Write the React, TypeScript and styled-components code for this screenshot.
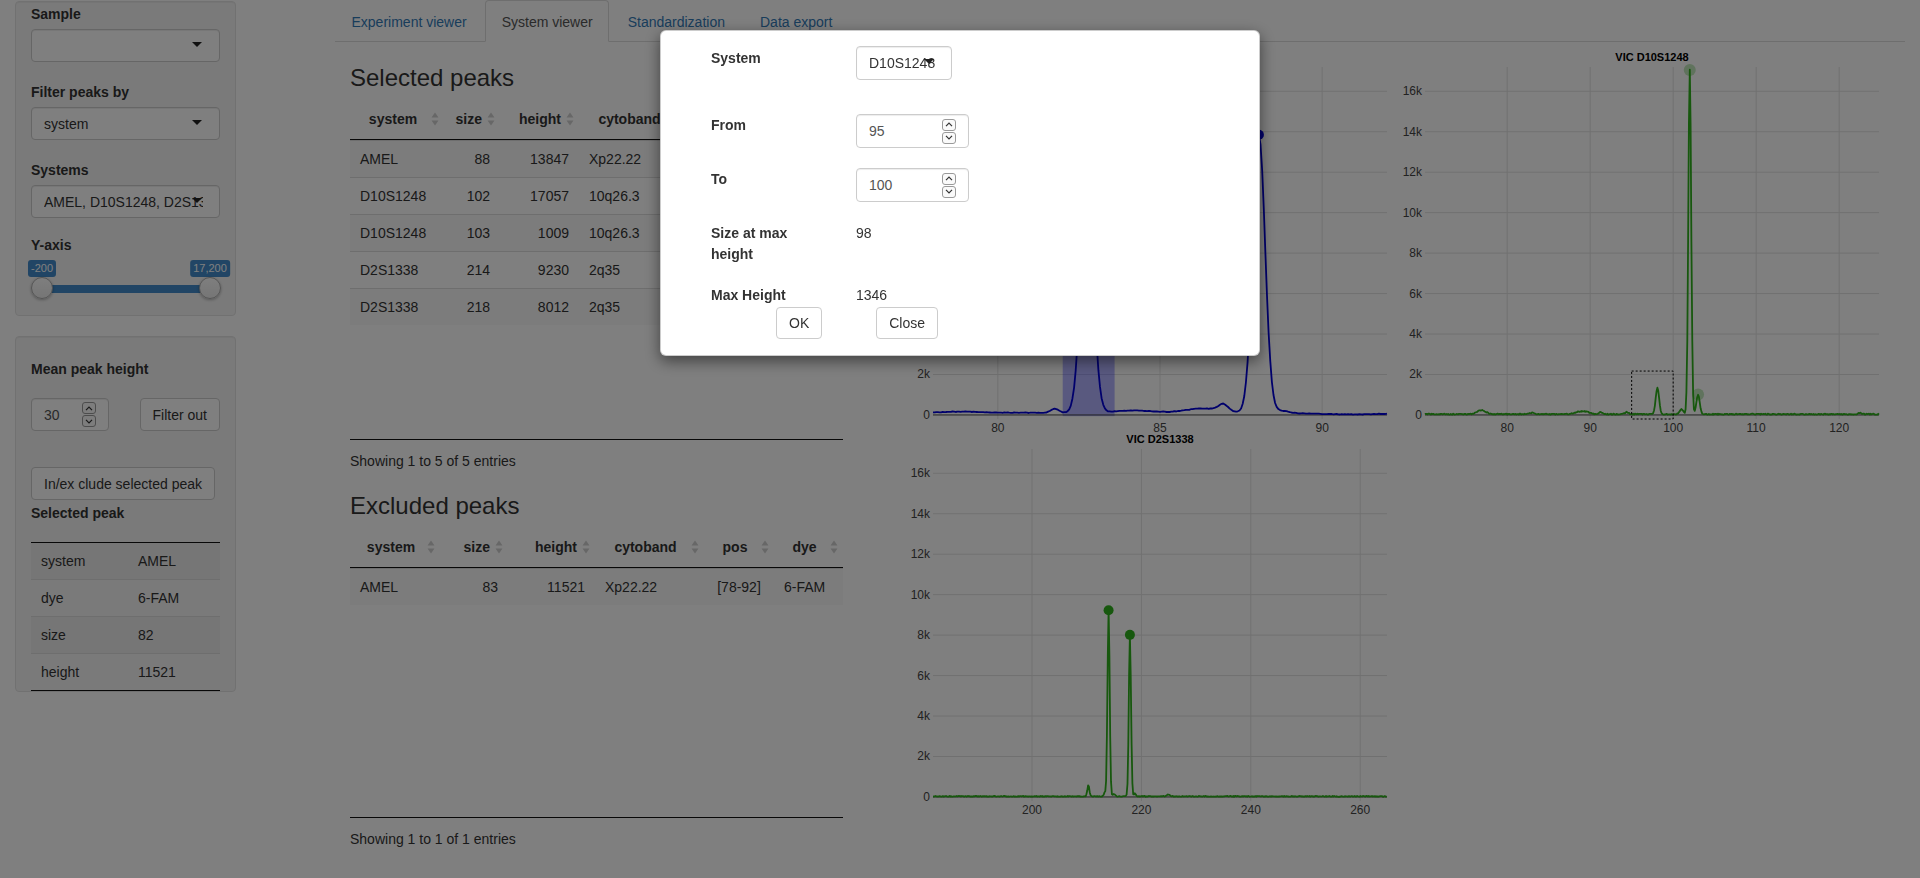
import React, { useMemo } from "react";
import styled, { createGlobalStyle } from "styled-components";

const GlobalStyle = createGlobalStyle`
  * { box-sizing: border-box; }
  html, body { margin: 0; padding: 0; background: #fff; }
  body {
    font-family: "Liberation Sans", Arial, Helvetica, sans-serif;
    font-size: 14px;
    line-height: 20px;
    color: #333;
  }
`;

/* ---------- layout ---------- */

const Page = styled.div`
  display: grid;
  grid-template-columns: 320px 1600px;
  width: 1920px;
  height: 878px;
  overflow: hidden;
`;

const Sidebar = styled.aside`
  padding: 1px 15px 0;
`;

const Well = styled.div<{ $pt: number; $pb: number }>`
  width: 221px;
  padding: ${(p) => p.$pt}px 15px ${(p) => p.$pb}px;
  background: #f5f5f5;
  border: 1px solid #e3e3e3;
  border-radius: 4px;
  box-shadow: inset 0 1px 1px rgba(0, 0, 0, 0.05);
  & + & {
    margin-top: 20px;
  }
`;

const SideLabel = styled.div<{ $mt?: number; $mb?: number }>`
  margin-top: ${(p) => p.$mt ?? 0}px;
  margin-bottom: ${(p) => p.$mb ?? 0}px;
  font-weight: bold;
`;

const Row = styled.div<{ $mt?: number; $gap?: number }>`
  display: flex;
  align-items: center;
  gap: ${(p) => p.$gap ?? 0}px;
  margin-top: ${(p) => p.$mt ?? 0}px;
`;

const Main = styled.main`
  padding: 0 15px;
`;

/* ---------- form controls ---------- */

const Control = styled.div<{ $w: number; $h: number }>`
  position: relative;
  display: flex;
  align-items: center;
  width: ${(p) => p.$w}px;
  height: ${(p) => p.$h}px;
  padding: 0 12px;
  color: #555;
  background: #fff;
  border: 1px solid #ccc;
  border-radius: 4px;
  box-shadow: inset 0 1px 1px rgba(0, 0, 0, 0.075);
`;

const ControlText = styled.span<{ $clip: number }>`
  flex: 1;
  min-width: 0;
  overflow: ${(p) => (p.$clip > 0 ? "hidden" : "visible")};
  white-space: nowrap;
  margin-right: ${(p) => p.$clip}px;
  color: #333;
`;

const Caret = styled.span`
  position: absolute;
  right: 17px;
  top: 50%;
  margin-top: -4px;
  border-left: 5px solid transparent;
  border-right: 5px solid transparent;
  border-top: 5px solid #222;
`;

const SpinStack = styled.span`
  display: flex;
  flex-direction: column;
  gap: 1px;
  margin-left: auto;
`;

const SpinBtn = styled.span`
  display: flex;
  align-items: center;
  justify-content: center;
  width: 14px;
  height: 12px;
  background: #fafafa;
  border: 1px solid #9a9a9a;
  border-radius: 3px;
`;

const Button = styled.button<{ $h?: number }>`
  height: ${(p) => p.$h ?? 33}px;
  padding: 0 12px;
  font: inherit;
  color: #333;
  white-space: nowrap;
  background: #fff;
  border: 1px solid #ccc;
  border-radius: 4px;
`;

function Select({ value, w, h, clip = 4 }: { value: string; w: number; h: number; clip?: number }) {
  return (
    <Control $w={w} $h={h}>
      <ControlText $clip={clip}>{value}</ControlText>
      <Caret />
    </Control>
  );
}

function Chevron({ up }: { up?: boolean }) {
  return (
    <svg width="8" height="5" viewBox="0 0 8 5">
      <polyline
        points={up ? "1,4.2 4,1.2 7,4.2" : "1,0.8 4,3.8 7,0.8"}
        fill="none"
        stroke="#333"
        strokeWidth="1.2"
      />
    </svg>
  );
}

function NumberInput({ value, w, h }: { value: string; w: number; h: number }) {
  return (
    <Control $w={w} $h={h}>
      <span>{value}</span>
      <SpinStack>
        <SpinBtn>
          <Chevron up />
        </SpinBtn>
        <SpinBtn>
          <Chevron />
        </SpinBtn>
      </SpinStack>
    </Control>
  );
}

/* ---------- range slider ---------- */

const SliderBox = styled.div`
  position: relative;
  height: 40px;
`;

const SliderBar = styled.div`
  position: absolute;
  top: 25px;
  left: 11px;
  right: 10px;
  height: 8px;
  background: #428bca;
`;

const SliderTag = styled.span`
  position: absolute;
  top: 0;
  transform: translateX(-50%);
  padding: 0 3px;
  font-size: 11px;
  line-height: 17px;
  color: #fff;
  white-space: nowrap;
  background: #428bca;
  border-radius: 3px;
`;

const SliderHandle = styled.span`
  position: absolute;
  top: 17px;
  width: 22px;
  height: 22px;
  margin-left: -11px;
  background: linear-gradient(#fdfdfd, #ececec);
  border: 1px solid #a9a9a9;
  border-radius: 50%;
  box-shadow: 0 1px 3px rgba(0, 0, 0, 0.3);
`;

function RangeSlider({ min, max, from, to }: { min: number; max: number; from: number; to: number }) {
  const px = (v: number) => 11 + ((v - min) / (max - min)) * 168;
  const fmt = (v: number) => v.toLocaleString("en-US");
  return (
    <SliderBox>
      <SliderBar />
      <SliderTag style={{ left: px(from) }}>{fmt(from)}</SliderTag>
      <SliderTag style={{ left: px(to) }}>{fmt(to)}</SliderTag>
      <SliderHandle style={{ left: px(from) }} />
      <SliderHandle style={{ left: px(to) }} />
    </SliderBox>
  );
}

/* ---------- small key/value table ---------- */

const KVTable = styled.table`
  width: 189px;
  margin-top: 19px;
  table-layout: fixed;
  border-collapse: collapse;
  border-top: 1px solid #111;
  border-bottom: 1px solid #111;
  td {
    padding: 8px 10px;
  }
  tr + tr td {
    border-top: 1px solid #ddd;
  }
  tr:nth-child(odd) td {
    background: rgba(0, 0, 0, 0.035);
  }
`;

/* ---------- tabs ---------- */

const TabBar = styled.ul`
  display: flex;
  margin: 0;
  padding: 0;
  list-style: none;
  border-bottom: 1px solid #ddd;
`;

const Tab = styled.li<{ $active?: boolean }>`
  margin: 0 2px -1px 0;
  padding: 11px 15.5px 9px;
  color: ${(p) => (p.$active ? "#555" : "#337ab7")};
  background: ${(p) => (p.$active ? "#fff" : "transparent")};
  border: 1px solid ${(p) => (p.$active ? "#ddd" : "transparent")};
  border-bottom-color: transparent;
  border-radius: 4px 4px 0 0;
`;

const TabContent = styled.div`
  display: flex;
`;

const TablesCol = styled.section`
  width: 493px;
  margin-left: 15px;
`;

const Heading = styled.h3<{ $mt: number }>`
  margin: ${(p) => p.$mt}px 0 7px;
  font-size: 24px;
  font-weight: 500;
  line-height: 28px;
`;

const Info = styled.div`
  padding-top: 11px;
`;

/* ---------- data tables ---------- */

type Align = "left" | "center" | "right";
interface Col {
  name: string;
  width: number;
  head: Align;
  cell: Align;
}

const makeCols = (w: number[]): Col[] => [
  { name: "system", width: w[0], head: "center", cell: "left" },
  { name: "size", width: w[1], head: "right", cell: "right" },
  { name: "height", width: w[2], head: "right", cell: "right" },
  { name: "cytoband", width: w[3], head: "center", cell: "left" },
  { name: "pos", width: w[4], head: "center", cell: "center" },
  { name: "dye", width: w[5], head: "center", cell: "left" },
];

const GridTable = styled.table`
  width: 493px;
  table-layout: fixed;
  border-collapse: collapse;
`;

const Th = styled.th<{ $align: Align }>`
  position: relative;
  padding: 10px 18px 10px 10px;
  font-weight: bold;
  text-align: ${(p) => p.$align};
  border-bottom: 1px solid #111;
`;

const Td = styled.td<{ $align: Align }>`
  padding: 8px 10px;
  text-align: ${(p) => p.$align};
  white-space: nowrap;
  border-top: 1px solid #ddd;
`;

const BodyRow = styled.tr`
  &:nth-child(odd) td {
    background: #f9f9f9;
  }
`;

const ScrollBody = styled.div<{ $h: number }>`
  height: ${(p) => p.$h}px;
  overflow: hidden;
  border-bottom: 1px solid #111;
`;

const SortSvg = styled.svg`
  position: absolute;
  right: 5px;
  top: 50%;
  margin-top: -7px;
  fill: #cfcfcf;
`;

function SortIcon() {
  return (
    <SortSvg width="8" height="14" viewBox="0 0 8 14">
      <path d="M4 0.5 L7.5 5.5 L0.5 5.5 Z" />
      <path d="M4 13.5 L7.5 8.5 L0.5 8.5 Z" />
    </SortSvg>
  );
}

function Colgroup({ cols }: { cols: Col[] }) {
  return (
    <colgroup>
      {cols.map((c) => (
        <col key={c.name} style={{ width: c.width }} />
      ))}
    </colgroup>
  );
}

function PeakTable({ cols, rows, bodyHeight }: { cols: Col[]; rows: string[][]; bodyHeight: number }) {
  return (
    <div>
      <GridTable>
        <Colgroup cols={cols} />
        <thead>
          <tr>
            {cols.map((c) => (
              <Th key={c.name} $align={c.head}>
                {c.name}
                <SortIcon />
              </Th>
            ))}
          </tr>
        </thead>
      </GridTable>
      <ScrollBody $h={bodyHeight}>
        <GridTable>
          <Colgroup cols={cols} />
          <tbody>
            {rows.map((r, i) => (
              <BodyRow key={i}>
                {r.map((v, j) => (
                  <Td key={j} $align={cols[j].cell}>
                    {v}
                  </Td>
                ))}
              </BodyRow>
            ))}
          </tbody>
        </GridTable>
      </ScrollBody>
    </div>
  );
}

const selectedRows = [
  ["AMEL", "88", "13847", "Xp22.22", "[78-92]", "6-FAM"],
  ["D10S1248", "102", "17057", "10q26.3", "[70-125]", "VIC"],
  ["D10S1248", "103", "1009", "10q26.3", "[70-125]", "VIC"],
  ["D2S1338", "214", "9230", "2q35", "[182-265]", "VIC"],
  ["D2S1338", "218", "8012", "2q35", "[182-265]", "VIC"],
];
const excludedRows = [["AMEL", "83", "11521", "Xp22.22", "[78-92]", "6-FAM"]];

/* ---------- electropherogram charts ---------- */

const PlotsGrid = styled.section`
  display: grid;
  grid-template-columns: repeat(2, 492px);
  grid-template-rows: repeat(2, 382px);
  margin: 2px 0 0 52px;
`;

const ChartSvg = styled.svg`
  display: block;
  overflow: visible;
  font-family: "Liberation Sans", Arial, sans-serif;
`;

const AxisText = styled.text`
  font-size: 12px;
  fill: #444;
`;

const TitleText = styled.text`
  font-size: 11px;
  font-weight: bold;
  fill: #000;
`;

type Peak = [number, number, number];

interface ChartProps {
  title: string;
  xMin: number;
  xMax: number;
  xTicks: number[];
  color: string;
  peaks: Peak[];
  base: number;
  noise: number;
  step: number;
  seed: number;
  dots?: { x: number; y: number; faint?: boolean }[];
  band?: [number, number];
  box?: [number, number, number, number];
}

const Y_MIN = -200;
const Y_MAX = 17200;
const CW = 492;
const CH = 382;
const PL = 38;
const PT = 23;
const PW = 454;
const PH = 352;
const yTicks = [0, 2000, 4000, 6000, 8000, 10000, 12000, 14000, 16000];

const rand = (i: number, seed: number) => {
  const s = Math.sin(i * 127.1 + seed * 311.7) * 43758.5453;
  return s - Math.floor(s);
};

function Chart({ title, xMin, xMax, xTicks, color, peaks, base, noise, step, seed, dots = [], band, box }: ChartProps) {
  const sx = (u: number) => PL + ((u - xMin) / (xMax - xMin)) * PW;
  const sy = (v: number) => PT + ((Y_MAX - v) / (Y_MAX - Y_MIN)) * PH;

  const path = useMemo(() => {
    const pts: string[] = [];
    const n = Math.round((xMax - xMin) / step);
    for (let i = 0; i <= n; i++) {
      const u = xMin + i * step;
      let v = base + (rand(i, seed) - 0.5) * noise;
      for (const [c, h, s] of peaks) v += h * Math.exp(-((u - c) ** 2) / (2 * s * s));
      pts.push(`${sx(u).toFixed(1)},${sy(v).toFixed(1)}`);
    }
    return "M" + pts.join("L");
  }, [xMin, xMax, step, base, noise, seed, peaks]);

  return (
    <ChartSvg width={CW} height={CH} viewBox={`0 0 ${CW} ${CH}`}>
      {yTicks.slice(1).map((t) => (
        <line key={t} x1={PL} x2={PL + PW} y1={sy(t)} y2={sy(t)} stroke="#e1e1e1" />
      ))}
      {xTicks.map((t) => (
        <line key={t} x1={sx(t)} x2={sx(t)} y1={PT} y2={PT + PH} stroke="#e1e1e1" />
      ))}
      {band && (
        <rect
          x={sx(band[0])}
          y={PT}
          width={sx(band[1]) - sx(band[0])}
          height={sy(-60) - PT}
          fill="rgba(0, 0, 255, 0.3)"
        />
      )}
      <line x1={PL} x2={PL + PW} y1={sy(0)} y2={sy(0)} stroke="#444" />
      <path d={path} fill="none" stroke={color} strokeWidth="1.8" strokeLinejoin="round" />
      {dots.map((d, i) => (
        <circle
          key={i}
          cx={sx(d.x)}
          cy={sy(d.y)}
          r={d.faint ? 6 : 5}
          fill={color}
          fillOpacity={d.faint ? 0.3 : 1}
        />
      ))}
      {box && (
        <rect
          x={sx(box[0])}
          y={sy(box[3])}
          width={sx(box[1]) - sx(box[0])}
          height={sy(box[2]) - sy(box[3])}
          fill="none"
          stroke="#000"
          strokeDasharray="2,2"
        />
      )}
      {yTicks.map((t) => (
        <AxisText key={t} x={PL - 3} y={sy(t) + 4} textAnchor="end">
          {t === 0 ? "0" : `${t / 1000}k`}
        </AxisText>
      ))}
      {xTicks.map((t) => (
        <AxisText key={t} x={sx(t)} y={388} textAnchor="middle">
          {t}
        </AxisText>
      ))}
      <TitleText x={PL + PW / 2} y={17} textAnchor="middle">
        {title}
      </TitleText>
    </ChartSvg>
  );
}

const amelPeaks: Peak[] = [
  [78.8, 50, 0.6],
  [81.75, 200, 0.12],
  [82.75, 11410, 0.19],
  [84.2, 110, 0.6],
  [86.3, 210, 0.5],
  [86.95, 360, 0.15],
  [88.05, 13740, 0.19],
  [88.75, 110, 0.2],
  [90.9, -80, 1.1],
];

const d10Peaks: Peak[] = [
  [76.9, 200, 0.5],
  [83.0, 70, 0.3],
  [88.5, 100, 0.4],
  [89.4, 120, 0.5],
  [91.3, 90, 0.25],
  [94.4, 100, 0.2],
  [98.1, 1300, 0.2],
  [101.0, 250, 0.2],
  [102.0, 17010, 0.17],
  [103.0, 950, 0.2],
  [122.5, 60, 0.2],
];

const d2Peaks: Peak[] = [
  [210.3, 550, 0.18],
  [213.3, 180, 0.15],
  [214.0, 9200, 0.2],
  [215.0, 120, 0.2],
  [217.9, 7980, 0.2],
  [218.8, 150, 0.15],
  [224.9, 80, 0.3],
];

/* ---------- modal ---------- */

const Backdrop = styled.div`
  position: fixed;
  inset: 0;
  z-index: 1040;
  background: #000;
  opacity: 0.5;
`;

const Dialog = styled.div`
  position: fixed;
  top: 30px;
  left: 660px;
  z-index: 1050;
  width: 600px;
  padding: 15px 15px 16px 50px;
  background: #fff;
  border: 1px solid rgba(0, 0, 0, 0.2);
  border-radius: 6px;
  box-shadow: 0 5px 15px rgba(0, 0, 0, 0.5);
`;

const FieldRow = styled.div<{ $mt?: number }>`
  display: grid;
  grid-template-columns: 145px auto;
  align-items: start;
  margin-top: ${(p) => p.$mt ?? 0}px;
  line-height: 21px;
`;

const FieldName = styled.div<{ $pt?: number }>`
  max-width: 110px;
  padding-top: ${(p) => p.$pt ?? 0}px;
  font-weight: bold;
`;

const ButtonBar = styled.div`
  display: flex;
  gap: 54px;
  margin-top: 1px;
  padding-left: 65px;
`;

export default function App() {
  return (
    <>
      <GlobalStyle />
      <Page>
        <Sidebar>
          <Well $pt={2} $pb={15}>
            <SideLabel $mb={5}>Sample</SideLabel>
            <Select value="" w={189} h={33} />
            <SideLabel $mt={20} $mb={5}>
              Filter peaks by
            </SideLabel>
            <Select value="system" w={189} h={33} />
            <SideLabel $mt={20} $mb={5}>
              Systems
            </SideLabel>
            <Select value="AMEL, D10S1248, D2S1338" w={189} h={33} />
            <SideLabel $mt={17} $mb={5}>
              Y-axis
            </SideLabel>
            <RangeSlider min={-200} max={17200} from={-200} to={17200} />
          </Well>
          <Well $pt={22} $pb={0}>
            <SideLabel>Mean peak height</SideLabel>
            <Row $mt={19} $gap={31}>
              <NumberInput value="30" w={79} h={33} />
              <Button>Filter out</Button>
            </Row>
            <Row $mt={36}>
              <Button>In/ex clude selected peak</Button>
            </Row>
            <SideLabel $mt={3}>Selected peak</SideLabel>
            <KVTable>
              <colgroup>
                <col style={{ width: 97 }} />
                <col style={{ width: 92 }} />
              </colgroup>
              <tbody>
                <tr>
                  <td>system</td>
                  <td>AMEL</td>
                </tr>
                <tr>
                  <td>dye</td>
                  <td>6-FAM</td>
                </tr>
                <tr>
                  <td>size</td>
                  <td>82</td>
                </tr>
                <tr>
                  <td>height</td>
                  <td>11521</td>
                </tr>
              </tbody>
            </KVTable>
          </Well>
        </Sidebar>

        <Main>
          <TabBar>
            <Tab>Experiment viewer</Tab>
            <Tab $active>System viewer</Tab>
            <Tab>Standardization</Tab>
            <Tab>Data export</Tab>
          </TabBar>
          <TabContent>
            <TablesCol>
              <Heading $mt={22}>Selected peaks</Heading>
              <PeakTable cols={makeCols([94, 56, 79, 109, 86, 69])} rows={selectedRows} bodyHeight={300} />
              <Info>Showing 1 to 5 of 5 entries</Info>
              <Heading $mt={21}>Excluded peaks</Heading>
              <PeakTable cols={makeCols([90, 68, 87, 109, 70, 69])} rows={excludedRows} bodyHeight={250} />
              <Info>Showing 1 to 1 of 1 entries</Info>
            </TablesCol>
            <PlotsGrid>
              <Chart
                title="6-FAM AMEL"
                xMin={78}
                xMax={92}
                xTicks={[80, 85, 90]}
                color="#0000d8"
                peaks={amelPeaks}
                base={110}
                noise={25}
                step={0.05}
                seed={3}
                band={[82, 83.6]}
                dots={[{ x: 88.05, y: 13847 }]}
              />
              <Chart
                title="VIC D10S1248"
                xMin={70.1}
                xMax={124.8}
                xTicks={[80, 90, 100, 110, 120]}
                color="#2fb01c"
                peaks={d10Peaks}
                base={40}
                noise={50}
                step={0.1}
                seed={7}
                box={[95, 100, -200, 2170]}
                dots={[
                  { x: 102, y: 17057, faint: true },
                  { x: 103, y: 1009, faint: true },
                ]}
              />
              <Chart
                title="VIC D2S1338"
                xMin={181.9}
                xMax={264.9}
                xTicks={[200, 220, 240, 260]}
                color="#2fb01c"
                peaks={d2Peaks}
                base={30}
                noise={40}
                step={0.15}
                seed={11}
                dots={[
                  { x: 214, y: 9230 },
                  { x: 217.9, y: 8012 },
                ]}
              />
            </PlotsGrid>
          </TabContent>
        </Main>
      </Page>

      <Backdrop />
      <Dialog>
        <FieldRow>
          <FieldName $pt={2}>System</FieldName>
          <Select value="D10S1248" w={96} h={34} clip={0} />
        </FieldRow>
        <FieldRow $mt={34}>
          <FieldName $pt={1}>From</FieldName>
          <NumberInput value="95" w={113} h={34} />
        </FieldRow>
        <FieldRow $mt={20}>
          <FieldName $pt={1}>To</FieldName>
          <NumberInput value="100" w={113} h={34} />
        </FieldRow>
        <FieldRow $mt={21}>
          <FieldName>Size at max height</FieldName>
          <div>98</div>
        </FieldRow>
        <FieldRow $mt={20}>
          <FieldName>Max Height</FieldName>
          <div>1346</div>
        </FieldRow>
        <ButtonBar>
          <Button $h={32}>OK</Button>
          <Button $h={32}>Close</Button>
        </ButtonBar>
      </Dialog>
    </>
  );
}
